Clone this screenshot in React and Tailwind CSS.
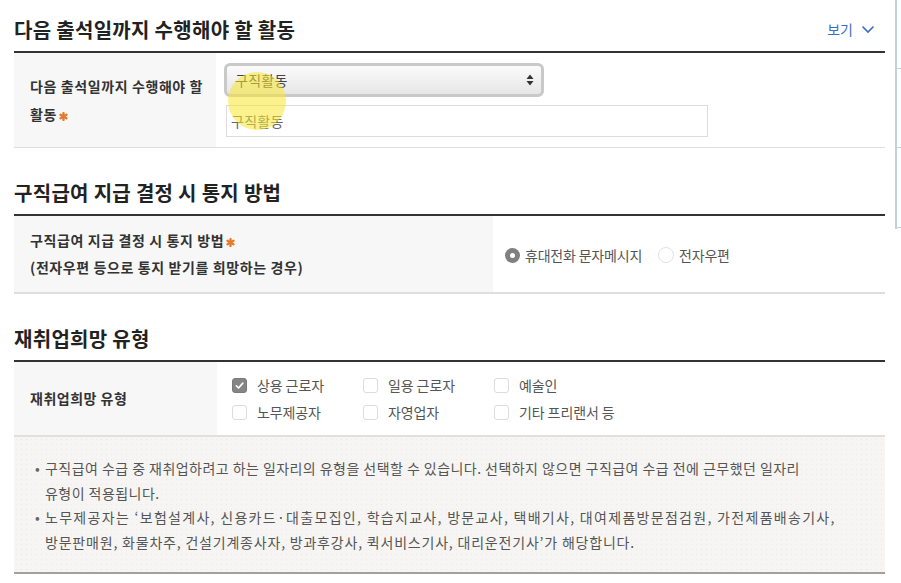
import React from 'react';

const font = { fontFamily: '"Noto Sans CJK KR", "Noto Sans", sans-serif' };

const SectionTitle = ({ title, right, first }) => (
  <div className={`flex items-center justify-between border-b-2 border-[#333] pb-[9px] pt-[17px] ${first ? '' : 'mt-[15px]'}`}>
    <h2 className="text-[20px] font-bold leading-[25px] tracking-[0.3px] text-[#222]">{title}</h2>
    {right}
  </div>
);

// 주황색 필수 표시
const Required = () => (
  <svg className="ml-[2px] inline-block align-[-1px]" width="9" height="9" viewBox="0 0 10 10">
    <g stroke="#e57a2a" strokeWidth="2.6" strokeLinecap="round">
      <path d="M5 1.2 V8.8" />
      <path d="M1.7 3.1 L8.3 6.9" />
      <path d="M1.7 6.9 L8.3 3.1" />
    </g>
  </svg>
);

const Checkbox = ({ checked, label }) => (
  <label className="flex items-center gap-[10px]">
    <span
      className={`flex h-[15px] w-[15px] items-center justify-center rounded-[3px] border ${
        checked ? 'border-[#7a7a7a] bg-[#858585]' : 'border-[#dcdcdc] bg-white'
      }`}
    >
      {checked && (
        <svg width="11" height="11" viewBox="0 0 12 12">
          <path d="M2.5 6.3 L5 8.7 L9.6 3.4" fill="none" stroke="#fff" strokeWidth="1.8" strokeLinecap="round" strokeLinejoin="round" />
        </svg>
      )}
    </span>
    <span className="text-[14px] tracking-[-0.1px] text-[#555]">{label}</span>
  </label>
);

const Radio = ({ checked, label }) => (
  <label className="flex items-center gap-[5px]">
    {checked ? (
      <span className="flex h-[15px] w-[15px] items-center justify-center rounded-full bg-[#808080]">
        <span className="h-[5px] w-[5px] rounded-full bg-white" />
      </span>
    ) : (
      <span className="h-[16px] w-[16px] rounded-full border border-[#e2e2e2] bg-white" />
    )}
    <span className="text-[14px] tracking-[-0.2px] text-[#555]">{label}</span>
  </label>
);

export default function App() {
  return (
    <div className="flex h-[583px] w-[901px] overflow-hidden bg-white" style={font}>
      <div className="relative w-[885px] pl-[14px]">
        {/* 다음 출석일까지 수행해야 할 활동 */}
        <SectionTitle
          first
          title="다음 출석일까지 수행해야 할 활동"
          right={
            <button className="mr-[10px] flex items-center gap-[8px] text-[14px] text-[#3b6fc4]">
              보기
              <svg width="14" height="9" viewBox="0 0 14 9">
                <path d="M1.5 1.5 L7 7 L12.5 1.5" fill="none" stroke="#3b6fc4" strokeWidth="1.6" />
              </svg>
            </button>
          }
        />
        <div className="flex border-b border-[#dedede]">
          <div className="flex w-[202px] flex-col justify-center bg-[#f7f7f7] pl-[16px] pr-[4px] text-[14px] font-bold leading-[28px] tracking-[0.6px] text-[#333]">
            <span className="whitespace-nowrap">다음 출석일까지 수행해야 할</span>
            <span>
              활동
              <Required />
            </span>
          </div>
          <div className="flex flex-col gap-[8px] pb-[10px] pl-[8px] pt-[10px]">
            <div className="flex h-[34px] w-[320px] items-center justify-between rounded-[6px] border-[3px] border-[#c9c9c9] bg-gradient-to-b from-[#fbfbfb] to-[#e6e6e6] pl-[8px] pr-[7px]">
              <span className="text-[14px] tracking-[0.3px] text-[#444]">구직활동</span>
              <svg width="8" height="12" viewBox="0 0 8 12">
                <path d="M4 0.5 L7.5 5 L0.5 5 Z" fill="#333" />
                <path d="M4 11.5 L7.5 7 L0.5 7 Z" fill="#333" />
              </svg>
            </div>
            <div className="ml-[2px] flex h-[32px] w-[482px] items-center border border-[#dcdcdc] bg-white pl-[4px]">
              <span className="text-[14px] tracking-[0.3px] text-[#666]">구직활동</span>
            </div>
          </div>
        </div>
        <div className="pointer-events-none absolute left-[228px] top-[72px] h-[58px] w-[58px] rounded-full bg-[rgba(248,232,50,0.55)]" />

        {/* 구직급여 지급 결정 시 통지 방법 */}
        <SectionTitle title="구직급여 지급 결정 시 통지 방법" />
        <div className="flex h-[78px] border-b-2 border-[#dedede]">
          <div className="flex w-[479px] flex-col justify-center bg-[#f7f7f7] pl-[16px] text-[14px] font-bold leading-[27px] tracking-[0.6px] text-[#333]">
            <span>
              구직급여 지급 결정 시 통지 방법
              <Required />
            </span>
            <span>(전자우편 등으로 통지 받기를 희망하는 경우)</span>
          </div>
          <div className="flex items-center gap-[16px] pl-[12px] pt-[2px]">
            <Radio checked label="휴대전화 문자메시지" />
            <Radio label="전자우편" />
          </div>
        </div>

        {/* 재취업희망 유형 */}
        <SectionTitle title="재취업희망 유형" />
        <div className="flex h-[75px] border-b-2 border-[#e0e0e0]">
          <div className="flex w-[203px] items-center bg-[#f7f7f7] pl-[16px] text-[14px] font-bold tracking-[0.5px] text-[#333]">
            재취업희망 유형
          </div>
          <div className="grid grid-cols-[131px_131px_160px] content-center gap-y-[6px] pl-[15px]">
            <Checkbox checked label="상용 근로자" />
            <Checkbox label="일용 근로자" />
            <Checkbox label="예술인" />
            <Checkbox label="노무제공자" />
            <Checkbox label="자영업자" />
            <Checkbox label="기타 프리랜서 등" />
          </div>
        </div>
        <div className="h-[137px] border-b-2 border-[#a0a0a0] bg-[#f6f5f3] bg-[radial-gradient(#ebe9e5_0.7px,transparent_0.8px)] bg-[length:5px_5px] pl-[21px] pt-[19px] text-[14px] leading-[24.5px] tracking-[0.45px] text-[#555]">
          <ul>
            <li className="flex">
              <span className="w-[10px] text-[#666]">•</span>
              <span className="whitespace-nowrap">
                구직급여 수급 중 재취업하려고 하는 일자리의 유형을 선택할 수 있습니다. 선택하지 않으면 구직급여 수급 전에 근무했던 일자리
                <br />
                유형이 적용됩니다.
              </span>
            </li>
            <li className="flex">
              <span className="w-[10px] text-[#666]">•</span>
              <span className="whitespace-nowrap">
                <span className="tracking-[1.3px]">
                  노무제공자는 ‘보험설계사, 신용카드·대출모집인, 학습지교사, 방문교사, 택배기사, 대여제품방문점검원, 가전제품배송기사,
                </span>
                <br />
                <span className="tracking-[0.8px]">
                  방문판매원, 화물차주, 건설기계종사자, 방과후강사, 퀵서비스기사, 대리운전기사’가 해당합니다.
                </span>
              </span>
            </li>
          </ul>
        </div>
      </div>

      {/* 오른쪽 패널 가장자리 */}
      <div className="ml-[10px] flex h-[229px] w-[6px] flex-col border-l-2 border-[#c3d0de]">
        <div className="h-[69px] border-b border-[#c3d0de]" />
        <div className="h-[79px] border-b border-[#c3d0de]" />
        <div className="h-[80px] border-b border-[#c3d0de]" />
      </div>
    </div>
  );
}
